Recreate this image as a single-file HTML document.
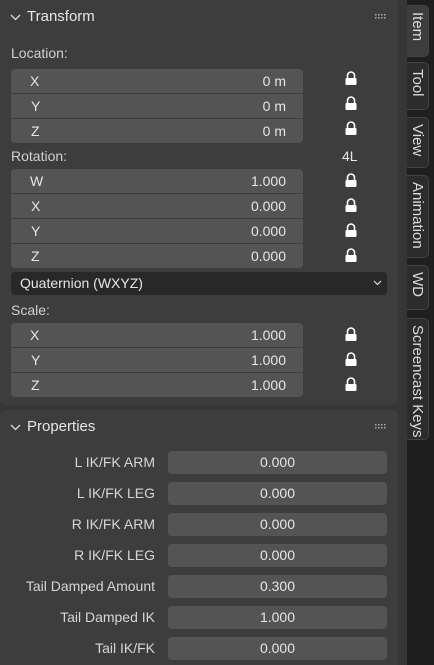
<!DOCTYPE html>
<html><head><style>
*{margin:0;padding:0;box-sizing:border-box}
body{width:434px;height:665px;background:#363636;font-family:"Liberation Sans","DejaVu Sans",sans-serif;font-size:14px;color:#e6e6e6;position:relative;overflow:hidden}
.a{position:absolute}
.panel{background:#3d3d3d;left:0;width:398px}
.f{position:absolute;background:#545454;height:24px;left:11px;width:292px}
.f span{position:absolute;top:4px}
.lbl{position:absolute;left:11px;color:#d0d0d0}
.pf{position:absolute;left:168px;width:219px;height:23px;background:#545454;border-radius:4px;text-align:center;line-height:23px}
.pl{position:absolute;right:279px;text-align:right;line-height:23px;color:#d6d6d6}
.tabs{left:407px;top:0;width:27px;height:665px;background:#1f1f1f}
.tab{position:absolute;left:0;width:22px;background:#2c2c2c;border:1px solid #444;border-left:none;border-radius:0 5px 5px 0}
.tab span{position:absolute;left:2px;top:6px;writing-mode:vertical-rl;font-size:15px;color:#dcdcdc;white-space:nowrap}
</style></head><body>
<div class="a panel" style="top:0;height:405px;border-radius:0 0 5px 5px"></div>
<div class="a panel" style="top:410px;height:255px;border-radius:5px 5px 0 0"></div>

<svg class="a" style="left:0;top:0" width="398" height="440">
<g fill="none" stroke="#ddd" stroke-width="1.3"><path d="M11 15l4.5 4.5L20 15"/><path d="M11 425l4.5 4.5L20 425"/><path d="M374 281l3.5 3.5L381 281" stroke-width="1.1"/></g>
<g fill="#aaa">
<rect x="375" y="14" width="1.5" height="1.5"/><rect x="378" y="14" width="1.5" height="1.5"/><rect x="381" y="14" width="1.5" height="1.5"/><rect x="384" y="14" width="1.5" height="1.5"/>
<rect x="375" y="17" width="1.5" height="1.5"/><rect x="378" y="17" width="1.5" height="1.5"/><rect x="381" y="17" width="1.5" height="1.5"/><rect x="384" y="17" width="1.5" height="1.5"/>
<rect x="375" y="424" width="1.5" height="1.5"/><rect x="378" y="424" width="1.5" height="1.5"/><rect x="381" y="424" width="1.5" height="1.5"/><rect x="384" y="424" width="1.5" height="1.5"/>
<rect x="375" y="427" width="1.5" height="1.5"/><rect x="378" y="427" width="1.5" height="1.5"/><rect x="381" y="427" width="1.5" height="1.5"/><rect x="384" y="427" width="1.5" height="1.5"/>
</g></svg>
<div class="a" style="left:27px;top:8px;font-size:15px">Transform</div>

<div class="lbl" style="top:45px">Location:</div>
<div class="f" style="top:69px;border-radius:4px 4px 0 0"><span style="left:19px">X</span><span style="right:17px">0 m</span></div>
<div class="f" style="top:94px"><span style="left:20px">Y</span><span style="right:17px">0 m</span></div>
<div class="f" style="top:119px;border-radius:0 0 4px 4px"><span style="left:20px">Z</span><span style="right:17px">0 m</span></div>

<div class="lbl" style="top:148px">Rotation:</div>
<div class="a" style="left:342px;top:148px">4L</div>
<div class="f" style="top:169px;border-radius:4px 4px 0 0"><span style="left:19px">W</span><span style="right:17px">1.000</span></div>
<div class="f" style="top:194px"><span style="left:20px">X</span><span style="right:17px">0.000</span></div>
<div class="f" style="top:219px"><span style="left:20px">Y</span><span style="right:17px">0.000</span></div>
<div class="f" style="top:244px;border-radius:0 0 4px 4px"><span style="left:20px">Z</span><span style="right:17px">0.000</span></div>

<div class="a" style="left:11px;top:272px;width:376px;height:23px;background:#282828;border-radius:4px"><span class="a" style="left:9px;top:3px">Quaternion (WXYZ)</span></div>
<svg class="a" style="left:0;top:0" width="398" height="300"><path d="M374 281l3.5 3.5L381 281" fill="none" stroke="#ddd" stroke-width="1.2"/></svg>

<div class="lbl" style="top:302px">Scale:</div>
<div class="f" style="top:323px;border-radius:4px 4px 0 0"><span style="left:19px">X</span><span style="right:17px">1.000</span></div>
<div class="f" style="top:348px"><span style="left:20px">Y</span><span style="right:17px">1.000</span></div>
<div class="f" style="top:373px;border-radius:0 0 4px 4px"><span style="left:20px">Z</span><span style="right:17px">1.000</span></div>

<svg class="a" style="left:0;top:0" width="398" height="400">
<g fill="#fff" stroke="#fff">
<defs><g id="lk"><path d="M2.5 6V3.5a3.5 3.5 0 0 1 7 0V6" fill="none" stroke-width="1.6"/><rect x="0.5" y="6" width="11" height="7" rx="1" stroke="none"/></g></defs>
<use href="#lk" x="345" y="72"/><use href="#lk" x="345" y="97"/><use href="#lk" x="345" y="122"/>
<use href="#lk" x="345" y="174"/><use href="#lk" x="345" y="199"/><use href="#lk" x="345" y="224"/><use href="#lk" x="345" y="249"/>
<use href="#lk" x="345" y="328"/><use href="#lk" x="345" y="353"/><use href="#lk" x="345" y="378"/>
</g></svg>

<div class="a" style="left:27px;top:418px;font-size:15px">Properties</div>

<div class="pl" style="top:451px">L IK/FK ARM</div><div class="pf" style="top:451px">0.000</div>
<div class="pl" style="top:482px">L IK/FK LEG</div><div class="pf" style="top:482px">0.000</div>
<div class="pl" style="top:513px">R IK/FK ARM</div><div class="pf" style="top:513px">0.000</div>
<div class="pl" style="top:544px">R IK/FK LEG</div><div class="pf" style="top:544px">0.000</div>
<div class="pl" style="top:575px">Tail Damped Amount</div><div class="pf" style="top:575px">0.300</div>
<div class="pl" style="top:606px">Tail Damped IK</div><div class="pf" style="top:606px">1.000</div>
<div class="pl" style="top:637px">Tail IK/FK</div><div class="pf" style="top:637px">0.000</div>

<div class="a tabs">
<div class="tab" style="top:5px;height:52px;background:#3d3d3d"><span>Item</span></div>
<div class="tab" style="top:62px;height:48px"><span>Tool</span></div>
<div class="tab" style="top:117px;height:51px"><span>View</span></div>
<div class="tab" style="top:175px;height:83px"><span>Animation</span></div>
<div class="tab" style="top:265px;height:45px"><span>WD</span></div>
<div class="tab" style="top:318px;height:122px"><span>Screencast Keys</span></div>
</div>
</body></html>
